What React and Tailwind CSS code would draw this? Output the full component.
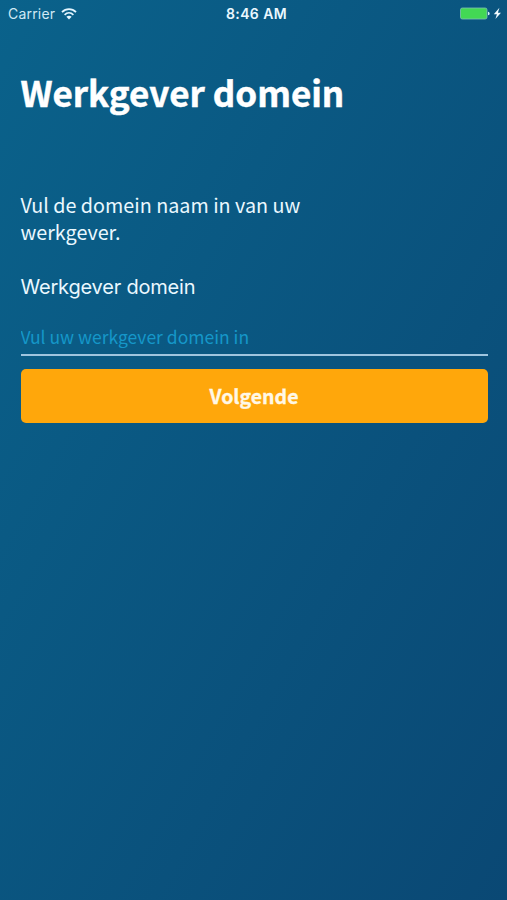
function WifiIcon() {
  return (
    <svg className="h-[12px] w-[16px]" viewBox="0 0 16 12" fill="none" stroke="#e4f6ff">
      <path d="M1 4.2C5 0.2 11 0.2 15 4.2" strokeWidth="1.8" />
      <path d="M3.6 6.8C6.2 4.3 9.8 4.3 12.4 6.8" strokeWidth="1.7" />
      <path d="M8 11.4L5.4 8.8C6.9 7.5 9.1 7.5 10.6 8.8Z" fill="#e4f6ff" stroke="none" />
    </svg>
  );
}

function BatteryIcon() {
  return (
    <svg className="h-[14px] w-[43px]" viewBox="0 0 43 14">
      <rect x="1.5" y="1" width="26.5" height="11" rx="1.8" fill="#43d854" stroke="#7fc3b4" strokeWidth="0.8" />
      <path d="M29 4.7C31.2 5.1 31.2 7.9 29 8.3Z" fill="#d5effa" />
      <path d="M40.4 0.8L34.8 7.2H37.9L36.4 12L42 5.7H38.9Z" fill="#f2fbff" />
    </svg>
  );
}

export default function App() {
  return (
    <div className="flex h-[900px] w-[507px] flex-col overflow-hidden bg-linear-to-br from-[#0a628b] to-[#0a4874] font-['Noto_Sans_CJK_SC',sans-serif] text-[#eaf8ff]">
      <header className="grid h-[27px] grid-cols-3 items-center pr-[5px] pl-[8px] font-['Inter',sans-serif]">
        <div className="flex items-center gap-[6px]">
          <span className="text-[14px] leading-[20px] tracking-[0.2px] text-[#cfe9f5]">Carrier</span>
          <WifiIcon />
        </div>
        <span className="pl-[3px] text-center text-[14px] leading-[20px] font-semibold tracking-[0.4px]">8:46 AM</span>
        <div className="flex justify-end">
          <BatteryIcon />
        </div>
      </header>
      <main className="flex flex-col pr-[19.5px] pl-[20.5px]">
        <h1 className="mt-[39px] text-[35px] leading-[52px] font-bold whitespace-nowrap text-white [-webkit-text-stroke:0.5px_white]">
          Werkgever domein
        </h1>
        <p className="mt-[73px] w-[310px] text-[19.75px] leading-[27px]">Vul de domein naam in van uw werkgever.</p>
        <label htmlFor="domain" className="mt-[28px] font-['Inter',sans-serif] text-[20px] leading-[28px] tracking-[-0.2px]">
          Werkgever domein
        </label>
        <input
          id="domain"
          className="mt-[21px] h-[34px] w-full border-b-2 border-[#9fc5df] pb-[3px] text-[17.5px] leading-[28px] outline-none placeholder:text-[#1597c9]"
          placeholder="Vul uw werkgever domein in"
        />
        <button className="mt-[12.5px] h-[54px] w-full rounded-[5px] bg-[#ffa70b] text-[19.5px] leading-[28px] font-bold text-[#fff8e6] [-webkit-text-stroke:0.3px_#fff8e6]">
          Volgende
        </button>
      </main>
    </div>
  );
}
